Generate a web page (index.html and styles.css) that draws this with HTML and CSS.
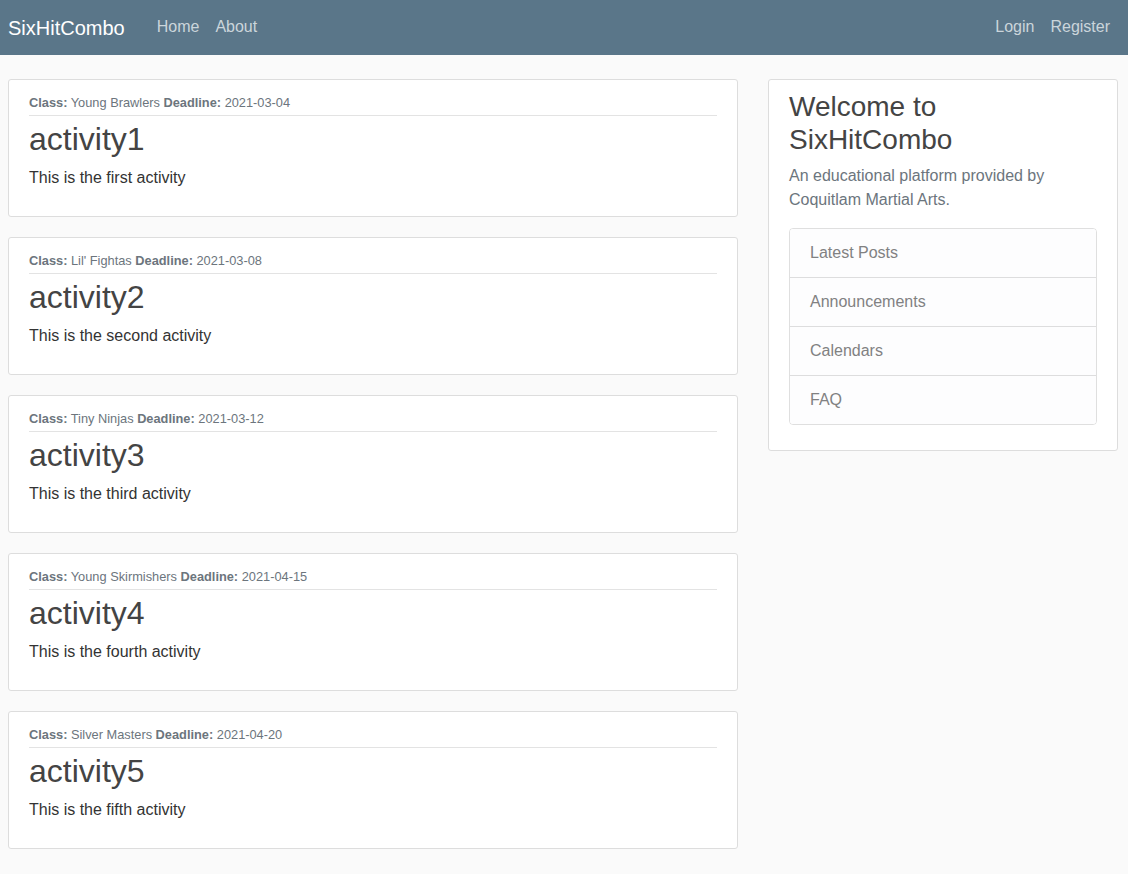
FILE: index.html
```html
<!DOCTYPE html>
<html lang="en">
<head>
<meta charset="utf-8">
<title>SixHitCombo</title>
<link rel="stylesheet" href="styles.css">
</head>
<body>
<header class="site-header">
  <nav class="navbar">
    <a class="brand" href="#">SixHitCombo</a>
    <div class="nav-left">
      <a class="nav-link" href="#">Home</a>
      <a class="nav-link" href="#">About</a>
    </div>
    <div class="nav-right">
      <a class="nav-link" href="#">Login</a>
      <a class="nav-link" href="#">Register</a>
    </div>
  </nav>
</header>
<main class="main">
  <div class="posts">
    <article class="content-section">
      <div class="article-metadata"><small class="text-muted"><b>Class:</b> Young Brawlers <b>Deadline:</b> 2021-03-04</small></div>
      <h2 class="article-title">activity1</h2>
      <p class="article-content">This is the first activity</p>
    </article>
    <article class="content-section">
      <div class="article-metadata"><small class="text-muted"><b>Class:</b> Lil' Fightas <b>Deadline:</b> 2021-03-08</small></div>
      <h2 class="article-title">activity2</h2>
      <p class="article-content">This is the second activity</p>
    </article>
    <article class="content-section">
      <div class="article-metadata"><small class="text-muted"><b>Class:</b> Tiny Ninjas <b>Deadline:</b> 2021-03-12</small></div>
      <h2 class="article-title">activity3</h2>
      <p class="article-content">This is the third activity</p>
    </article>
    <article class="content-section">
      <div class="article-metadata"><small class="text-muted"><b>Class:</b> Young Skirmishers <b>Deadline:</b> 2021-04-15</small></div>
      <h2 class="article-title">activity4</h2>
      <p class="article-content">This is the fourth activity</p>
    </article>
    <article class="content-section">
      <div class="article-metadata"><small class="text-muted"><b>Class:</b> Silver Masters <b>Deadline:</b> 2021-04-20</small></div>
      <h2 class="article-title">activity5</h2>
      <p class="article-content">This is the fifth activity</p>
    </article>
  </div>
  <aside class="sidebar">
    <div class="content-section">
      <h3 class="side-title">Welcome to SixHitCombo</h3>
      <p class="text-muted side-text">An educational platform provided by Coquitlam Martial Arts.</p>
      <ul class="list-group">
        <li class="list-group-item">Latest Posts</li>
        <li class="list-group-item">Announcements</li>
        <li class="list-group-item">Calendars</li>
        <li class="list-group-item">FAQ</li>
      </ul>
    </div>
  </aside>
</main>
</body>
</html>
```
FILE: styles.css
```css
* { box-sizing: border-box; }
html, body { margin: 0; padding: 0; }
body {
  background: #fafafa;
  color: #333333;
  font-family: "Liberation Sans", Arial, sans-serif;
  font-size: 16px;
  line-height: 1.5;
}
a { text-decoration: none; }

.site-header { background: #5a7689; }
.navbar {
  height: 55px;
  display: flex;
  align-items: center;
  padding: 0 10px 0 8px;
}
.brand {
  color: #ffffff;
  font-size: 20px;
  line-height: 30px;
  margin-right: 24px;
}
.nav-left, .nav-right { display: flex; margin-bottom: 2px; }
.nav-right { margin-left: auto; }
.nav-link {
  color: #cbd5db;
  padding: 0 8px;
  line-height: 24px;
}

.main {
  display: grid;
  grid-template-columns: 730px 350px;
  column-gap: 30px;
  padding: 24px 10px 0 8px;
  align-items: start;
}

.content-section {
  background: #ffffff;
  padding: 10px 20px;
  border: 1px solid #dddddd;
  border-radius: 3px;
  margin-bottom: 20px;
}
.text-muted { color: #6c757d; }
small { font-size: 80%; }

.article-metadata {
  padding-bottom: 1px;
  margin-bottom: 4px;
  border-bottom: 1px solid #e3e3e3;
}
.article-title {
  color: #444444;
  font-size: 32px;
  font-weight: 500;
  line-height: 38px;
  margin: 0 0 8px;
}
.article-content {
  margin: 0 0 16px;
  color: #333333;
}

.side-title {
  color: #444444;
  font-size: 28px;
  font-weight: 500;
  line-height: 33px;
  margin: 0 0 8px;
}
.side-text { margin: 0 0 16px; }

.list-group {
  list-style: none;
  margin: 0 0 15px;
  padding: 0;
  border: 1px solid rgba(0,0,0,.125);
  border-radius: 4px;
  overflow: hidden;
}
.list-group-item {
  background: #fdfdfe;
  color: #818182;
  padding: 12px 20px;
  border-top: 1px solid rgba(0,0,0,.125);
}
.list-group-item:first-child { border-top: 0; }
```
